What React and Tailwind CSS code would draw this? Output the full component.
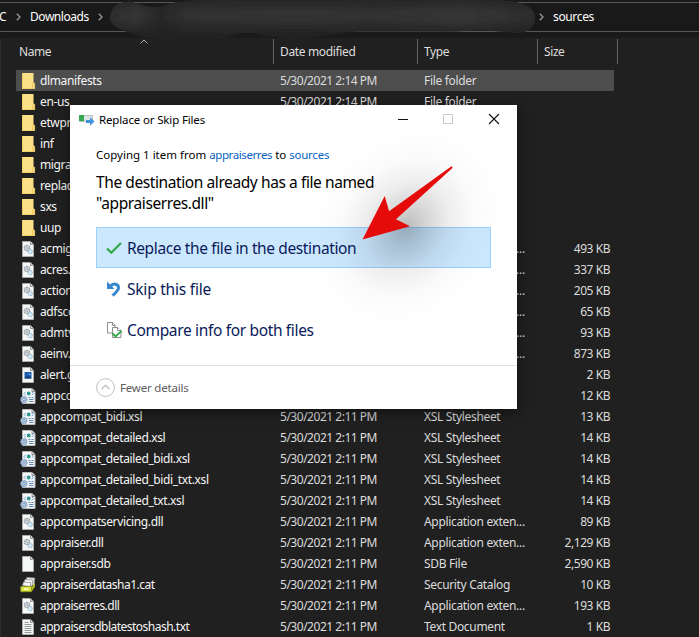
import React from "react";
import { clsx } from "clsx";

const EARLY = "5/30/2021 2:14 PM";
const LATE = "5/30/2021 2:11 PM";

const files = [
  { name: "dlmanifests", icon: "folder", date: EARLY, type: "File folder" },
  { name: "en-us", icon: "folder", date: EARLY, type: "File folder" },
  { name: "etwproviders", icon: "folder", date: EARLY, type: "File folder" },
  { name: "inf", icon: "folder", date: EARLY, type: "File folder" },
  { name: "migration", icon: "folder", date: EARLY, type: "File folder" },
  { name: "replacementmanifests", icon: "folder", date: EARLY, type: "File folder" },
  { name: "sxs", icon: "folder", date: EARLY, type: "File folder" },
  { name: "uup", icon: "folder", date: EARLY, type: "File folder" },
  { name: "acmigration.dll", icon: "dll", date: LATE, type: "Application exten...", size: "493 KB" },
  { name: "acres.dll", icon: "dll", date: LATE, type: "Application exten...", size: "337 KB" },
  { name: "actionqueue.dll", icon: "dll", date: LATE, type: "Application exten...", size: "205 KB" },
  { name: "adfscomp.dll", icon: "dll", date: LATE, type: "Application exten...", size: "65 KB" },
  { name: "admtv3check.dll", icon: "dll", date: LATE, type: "Application exten...", size: "93 KB" },
  { name: "aeinv.dll", icon: "dll", date: LATE, type: "Application exten...", size: "873 KB" },
  { name: "alert.gif", icon: "image", date: LATE, type: "GIF File", size: "2 KB" },
  { name: "appcompat.xsl", icon: "xsl", date: LATE, type: "XSL Stylesheet", size: "12 KB" },
  { name: "appcompat_bidi.xsl", icon: "xsl", date: LATE, type: "XSL Stylesheet", size: "13 KB" },
  { name: "appcompat_detailed.xsl", icon: "xsl", date: LATE, type: "XSL Stylesheet", size: "14 KB" },
  { name: "appcompat_detailed_bidi.xsl", icon: "xsl", date: LATE, type: "XSL Stylesheet", size: "14 KB" },
  { name: "appcompat_detailed_bidi_txt.xsl", icon: "xsl", date: LATE, type: "XSL Stylesheet", size: "14 KB" },
  { name: "appcompat_detailed_txt.xsl", icon: "xsl", date: LATE, type: "XSL Stylesheet", size: "14 KB" },
  { name: "appcompatservicing.dll", icon: "dll", date: LATE, type: "Application exten...", size: "89 KB" },
  { name: "appraiser.dll", icon: "dll", date: LATE, type: "Application exten...", size: "2,129 KB" },
  { name: "appraiser.sdb", icon: "blank", date: LATE, type: "SDB File", size: "2,590 KB" },
  { name: "appraiserdatasha1.cat", icon: "catalog", date: LATE, type: "Security Catalog", size: "10 KB", tight: true },
  { name: "appraiserres.dll", icon: "dll", date: LATE, type: "Application exten...", size: "193 KB", tight: true },
  { name: "appraisersdblatestoshash.txt", icon: "text", date: LATE, type: "Text Document", size: "1 KB", tight: true },
];

// Sheet of paper with a folded corner, shared by most file icons
function Page() {
  return (
    <>
      <path d="M2.5 .5h8l3 3v12h-11z" fill="#f5f6f6" stroke="#a9abac" />
      <path d="M10.5 .5v3h3" fill="#dcdddd" stroke="#8f9193" />
    </>
  );
}

function FileIcon({ kind }) {
  return (
    <svg viewBox="0 0 16 16" className="h-4 w-4 shrink-0">
      {kind === "folder" && (
        <>
          <path d="M2 0h11.500v9.500l1.200.7V16H2z" fill="#fde188" />
          <path d="M2 0h.9v16H2zM2 15.200h12.700v.8H2z" fill="#f0ca60" />
          <path d="M12.600 16v-5l1-1.300 1.100.8V16z" fill="#fbe08c" stroke="#e0b548" strokeWidth=".6" />
        </>
      )}
      {kind === "dll" && (
        <>
          <Page />
          <circle cx="7" cy="7" r="2.700" fill="#eef1f3" stroke="#8a949b" strokeWidth="1.200" strokeDasharray="1.100 .5" />
          <circle cx="7" cy="7" r="1.200" fill="#fff" stroke="#86929a" strokeWidth=".8" />
          <circle cx="10.200" cy="10.600" r="2" fill="#e3f1fa" stroke="#8fb7d2" strokeWidth="1.200" strokeDasharray=".9 .4" />
        </>
      )}
      {kind === "image" && (
        <>
          <Page />
          <path d="M4.500 5h7v6.500h-7z" fill="#1c5fae" />
          <path d="M4.500 11.500l2.500-3 1.600 1.500 1.200-1 1.700 2.500z" fill="#123a75" />
          <circle cx="9.600" cy="7.300" r=".9" fill="#61b8ef" />
        </>
      )}
      {kind === "xsl" && (
        <>
          <path d="M2.500 .5h9.500l3 3v12H2.500z" fill="#f7f8f8" stroke="#b9bbbc" />
          <path d="M12 .5v3h3" fill="#dcdddd" stroke="#8f9193" />
          <path d="M5.800 3.700L4 5.500l1.800 1.800M11.600 3.700l1.800 1.800-1.800 1.800" fill="none" stroke="#6c9fd0" />
          <circle cx="8.700" cy="5.500" r="1.900" fill="#2d9a8c" />
          <path d="M7.200 4.600l1.500-.8 1.200.9z" fill="#3f78c9" />
          <path d="M8.500 9.500h2M11.500 9.500h2M9 11.500h4.500M9 13.500h4.500" stroke="#5f87b8" />
          <circle cx="3.900" cy="11.600" r="3" fill="#bdd0e4" stroke="#8ba9ca" strokeWidth="1.600" strokeDasharray="1.500 .5" />
          <circle cx="3.900" cy="11.600" r="1.200" fill="#e9f1f9" stroke="#6688ad" strokeWidth=".8" />
        </>
      )}
      {kind === "blank" && <Page />}
      {kind === "text" && (
        <>
          <Page />
          <path d="M4.500 3.500h4M4.500 5.500h7M4.500 7.500h7M4.500 9.500h7M4.500 11.500h7M4.500 13.500h7" stroke="#8b8d8f" strokeWidth=".9" />
        </>
      )}
      {kind === "catalog" && (
        <>
          <path d="M6 3l.8-2.500 8 .5-1 8" fill="#f3f3f3" stroke="#898989" strokeWidth=".8" />
          <path d="M4 5.500l1-3 8 .5-1.200 6.500z" fill="#fff" stroke="#898989" strokeWidth=".8" />
          <path d="M2.500 8.500l1-3.500 7.500.6-1 4z" fill="#f8f8f8" stroke="#898989" strokeWidth=".8" />
          <path d="M11.500 10.500L15 5.500v4l-3.500 5.500z" fill="#aebb22" />
          <path d="M.8 9.500h10.700v5.200H.8z" fill="#dce443" stroke="#8f991d" strokeWidth=".8" />
          <path d="M4 11.300h4.500v1.400H4z" fill="#fbfbd0" />
        </>
      )}
    </svg>
  );
}

function Crumb() {
  return (
    <svg viewBox="0 0 5 8" className="h-2 w-[5px] shrink-0">
      <path d="M.8 .8L4 4 .8 7.200" fill="none" stroke="#9a9a9a" strokeWidth="1.300" />
    </svg>
  );
}

function AddressBar() {
  return (
    <div className="relative h-[38px] bg-[#1a1a1a] pt-[2px]">
      <div className="flex h-[30px] items-center border-y border-[#575757] bg-[#191919] text-white">
        <span className="-ml-px w-[17px] tracking-[-0.3px]">C</span>
        <Crumb />
        <span className="ml-[9px] w-[68px] tracking-[-0.45px]">Downloads</span>
        <Crumb />
        <span className="w-[436px]" />
        <Crumb />
        <span className="ml-[9px] tracking-[-0.35px]">sources</span>
      </div>
      {/* smudge over the middle of the path */}
      <svg viewBox="0 0 440 46" className="absolute left-[104px] top-0 h-[46px] w-[440px]">
        <defs>
          <linearGradient id="smudge" x1="0" x2="1">
            <stop offset="0" stopColor="#2d2d2d" />
            <stop offset=".06" stopColor="#343434" />
            <stop offset=".12" stopColor="#272727" />
            <stop offset=".18" stopColor="#303030" />
            <stop offset=".45" stopColor="#323232" />
            <stop offset=".62" stopColor="#303030" />
            <stop offset=".83" stopColor="#353535" />
            <stop offset="1" stopColor="#2c2c2c" />
          </linearGradient>
          <linearGradient id="fade" x1="0" x2="0" y1="0" y2="1">
            <stop offset="0" stopColor="#202020" stopOpacity=".7" />
            <stop offset=".4" stopColor="#202020" stopOpacity="0" />
            <stop offset=".6" stopColor="#202020" stopOpacity="0" />
            <stop offset="1" stopColor="#202020" stopOpacity=".75" />
          </linearGradient>
          <filter id="soft">
            <feGaussianBlur stdDeviation=".4" />
          </filter>
          <path
            id="blob"
            d="M6 17C7 7 14 2 24 1.500 32 2 38 6 46 7L58 7C62 4 70 2 84 1L120 -2H372L412 2C426 5 431 11 431 18 431 26 425 33 414 33L396 31.500 376 30 352 31.500 160 31.500 146 32.500 44 32.500C20 32 6 28 6 17Z"
          />
          <path id="bulge" d="M16 29C30 36 44 38 66 40 94 41 114 40 124 37L142 31C158 36 172 38 196 38 220 37 226 34 256 31V24H16Z" />
        </defs>
        <g filter="url(#soft)">
          <use href="#bulge" fill="#242424" />
          <use href="#blob" fill="url(#smudge)" />
          <use href="#blob" fill="url(#fade)" />
        </g>
      </svg>
    </div>
  );
}

function ColumnHeaders() {
  return (
    <div className="relative flex h-[32px] pt-px text-[#dedede]">
      <div className="flex h-[25px] w-[274px] items-center border-r border-[#636363] pl-[19px] tracking-[-0.4px]">Name</div>
      <div className="flex h-[25px] w-[144px] items-center border-r border-[#636363] pl-[6px] tracking-[-0.35px]">Date modified</div>
      <div className="flex h-[25px] w-[120px] items-center border-r border-[#636363] pl-[6px] tracking-[-0.4px]">Type</div>
      <div className="flex h-[25px] w-[80px] items-center border-r border-[#636363] pl-[6px] tracking-[-0.4px]">Size</div>
      <svg viewBox="0 0 8 5" className="absolute left-[140px] top-[1px] h-[5px] w-2">
        <path d="M.5 4.400L4 1l3.500 3.400" fill="none" stroke="#b5b5b5" />
      </svg>
    </div>
  );
}

function FileRow({ file, selected }) {
  return (
    <div
      className={clsx(
        "ml-4 flex h-[21px] w-[598px] items-center whitespace-nowrap pl-1 text-[#dcdcdc]",
        selected && "bg-[#4d4d4d]"
      )}
    >
      <FileIcon kind={file.icon} />
      <span className={clsx("ml-1 w-[240px] text-[#f6f6f6]", file.tight ? "tracking-[-0.51px]" : "tracking-[-0.37px]")}>
        {file.name}
      </span>
      <span className="w-[144px] tracking-[-0.48px]">{file.date}</span>
      <span className="w-[108px] tracking-[-0.33px]">{file.type}</span>
      <span className="w-[78px] text-right tracking-[-0.45px]">{file.size}</span>
    </div>
  );
}

function Option({ icon, label, active, className }) {
  return (
    <button
      className={clsx(
        "flex h-[41px] w-[395px] items-center border pl-[9px] text-left text-[#0a1a5c]",
        active ? "border-[#99d1ff] bg-[#cce8ff]" : "border-transparent"
      )}
    >
      <svg viewBox="0 0 16 16" className="h-4 w-4 shrink-0">
        {icon}
      </svg>
      <span className={clsx("ml-[5px] text-[15.500px]", className)}>{label}</span>
    </button>
  );
}

function ReplaceDialog() {
  return (
    <div className="absolute left-[70px] top-[105px] flex h-[304px] w-[447px] flex-col bg-white text-black shadow-[0_3px_12px_rgba(0,0,0,0.5)]">
      <div className="flex h-[29px] items-center pl-[9px]">
        <svg viewBox="0 0 16 12" className="h-3 w-4">
          <path d="M.5 1.500h13v6H.5z" fill="#dfe3e6" stroke="#b9bec2" />
          <path d="M0 1h5v6H0z" fill="#34a853" />
          <path d="M7 6h4V3.200L15.500 7.500 11 11.800V9H7z" fill="#3f91dc" />
        </svg>
        <span className="ml-1 w-[299px] text-[11.500px] tracking-[-0.15px]">Replace or Skip Files</span>
        <svg viewBox="0 0 102 12" className="-mt-px h-3 w-[102px]" fill="none">
          <path d="M0 6.500h10" stroke="#111" />
          <path d="M45.500 1.500h9v9h-9z" stroke="#c9c9c9" />
          <path d="M91 1l10 10m0-10l-10 10" stroke="#111" strokeWidth="1.100" />
        </svg>
      </div>

      <div className="flex-1 pl-[26px]">
        <p className="mt-[12px] text-[11.500px] leading-[18px]">
          Copying 1 item from <span className="tracking-[-0.4px] text-[#0a63c2]">appraiserres</span> to{" "}
          <span className="tracking-[-0.25px] text-[#0a63c2]">sources</span>
        </p>
        <p className="mt-[8px] text-[15.500px] leading-[21px] tracking-[-0.41px]">
          The destination already has a file named
          <br />
          "appraiserres.dll"
        </p>
        <div className="mt-[13px]">
          <Option
            active
            label="Replace the file in the destination"
            className="tracking-[-0.38px]"
            icon={<path d="M1 8.500l4.300 4.200L15 3" fill="none" stroke="#2fa84a" strokeWidth="2.200" />}
          />
          <Option
            label="Skip this file"
            className="tracking-[-0.22px]"
            icon={
              <>
                <path d="M4.500 5C8 1.500 12.500 3 12.500 7c0 2.500-2.500 4.500-6 7.500" fill="none" stroke="#3886cc" strokeWidth="3" />
                <path d="M1 .5v7.500h7.500z" fill="#3886cc" />
              </>
            }
          />
          <Option
            label="Compare info for both files"
            className="tracking-[-0.34px]"
            icon={
              <g fill="#fff" stroke="#8d8d8d">
                <path d="M1.500 .5h5l2.500 2.500v8H1.500z" />
                <path d="M6.500 .5v3H9" />
                <path d="M6.500 5.500h5l3.500 3v7H6.500z" />
                <path d="M11.500 5.500v3H15" />
                <path d="M6.500 11.500l3 3 6-5.500" fill="none" stroke="#2fa84a" strokeWidth="1.800" />
              </g>
            }
          />
        </div>
      </div>

      <div className="flex h-[44px] items-center border-t border-[#dfdfdf] pl-[26px]">
        <svg viewBox="0 0 19 19" className="h-[19px] w-[19px]" fill="none" stroke="#c0c0c0">
          <circle cx="9.500" cy="9.500" r="8.900" />
          <path d="M5.500 11.200l4-4 4 4" strokeWidth="1.400" />
        </svg>
        <span className="ml-[5px] text-[11.500px] tracking-[-0.2px] text-[#5c5c5c]">Fewer details</span>
      </div>
    </div>
  );
}

// Red pointer with its soft drop shadow
function Pointer() {
  return (
    <svg viewBox="-30 0 217 200" className="absolute left-[300px] top-[125px] h-[200px] w-[217px]">
      <defs>
        <radialGradient id="shade">
          <stop offset="0" stopColor="#000" stopOpacity=".27" />
          <stop offset=".2" stopColor="#000" stopOpacity=".17" />
          <stop offset=".45" stopColor="#000" stopOpacity=".07" />
          <stop offset=".7" stopColor="#000" stopOpacity=".02" />
          <stop offset="1" stopColor="#000" stopOpacity="0" />
        </radialGradient>
      </defs>
      <ellipse cx="76" cy="102" rx="104" ry="86" fill="url(#shade)" transform="rotate(-50 76 102)" />
      <path d="M32.500 114.500L54.700 71l4.400 15.300L121.500 41.200l1.200 1.500L66 94.300l14 7z" fill="#e60b0b" />
    </svg>
  );
}

export default function App() {
  return (
    <div className="relative h-[637px] w-[699px] overflow-hidden bg-[#202020] font-['Noto_Sans','Open_Sans',sans-serif] text-[12px] leading-[16px]">
      <AddressBar />
      <div className="border-l border-[#2b2b2b]">
        <div className="-ml-px">
          <ColumnHeaders />
          {files.map((file, i) => (
            <FileRow key={file.name} file={file} selected={i === 0} />
          ))}
        </div>
      </div>
      <ReplaceDialog />
      <Pointer />
    </div>
  );
}
